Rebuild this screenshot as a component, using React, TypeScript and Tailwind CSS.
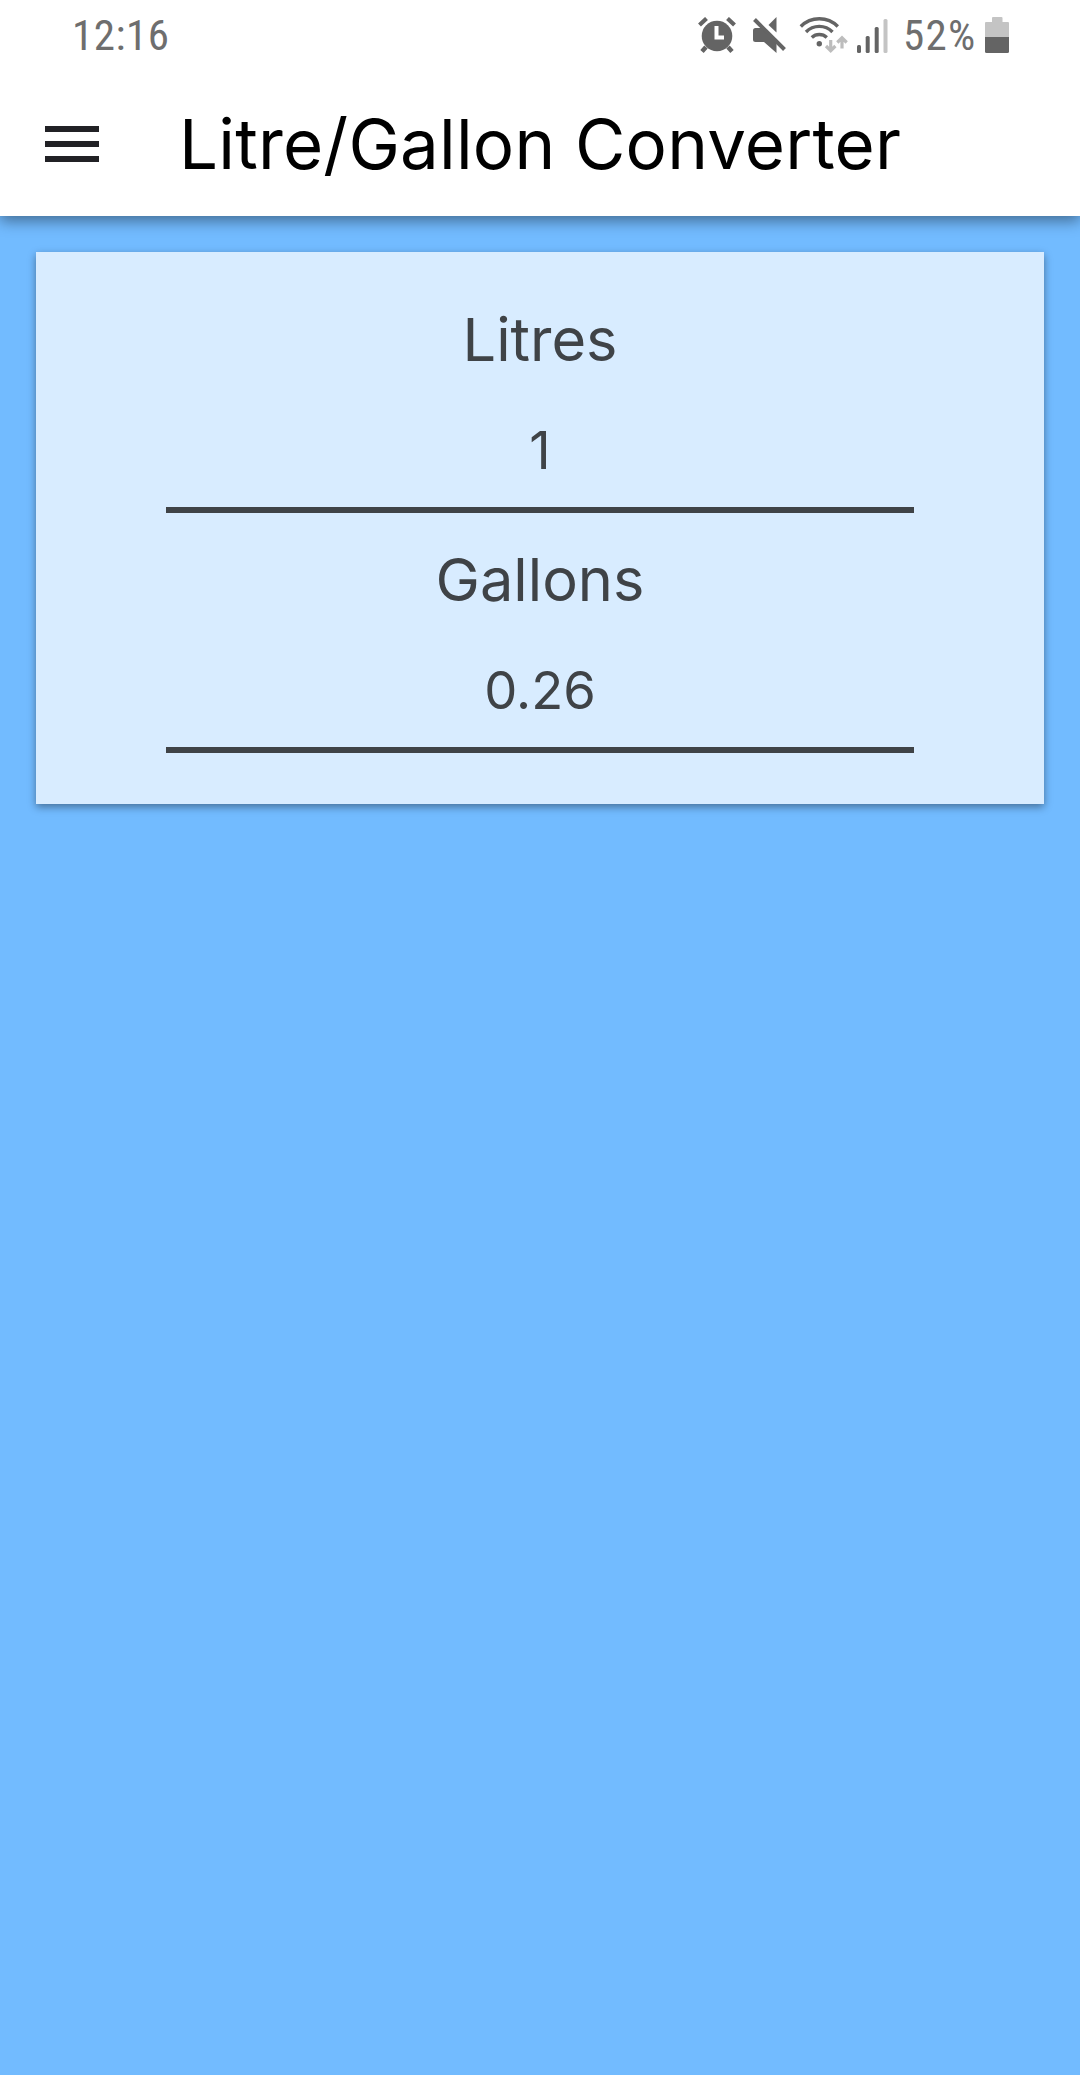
type ConverterFieldProps = {
  label: string;
  value: string;
};

function AlarmIcon() {
  return (
    <svg width="38" height="36" viewBox="0 0 38 36" fill="#646464" aria-hidden="true">
      <circle cx="19" cy="19" r="15.3" />
      <path d="M1.5 8 8.5 1.500M29.5 1.500l7 6.500" stroke="#646464" strokeWidth="4.2" />
      <path d="m8 30-4 4.500M30 30l4 4.500" stroke="#646464" strokeWidth="4.5" />
      <path d="M18.5 9v11.5H26" fill="none" stroke="#fff" strokeWidth="4" />
    </svg>
  );
}

function MuteIcon() {
  return (
    <svg width="34" height="36" viewBox="0 0 34 36" fill="#646464" aria-hidden="true">
      <path d="M0 13.5Q0 11 2.500 11H9L23.500 26v10L11 25H2.500Q0 25 0 22.500Z" />
      <path d="M23.500 0v15.500L15.500 8Z" />
      <path d="m1.500 2.500 30 30" stroke="#646464" strokeWidth="4" />
    </svg>
  );
}

function WifiIcon() {
  return (
    <svg width="50" height="36" viewBox="0 0 50 36" fill="none" aria-hidden="true">
      <g stroke="#646464" strokeWidth="3.4">
        <path d="M2.800 9.500a26 26 0 0 1 37 0" />
        <path d="M8 15a18.500 18.500 0 0 1 26.500 0" />
        <path d="M13.800 20.500a11 11 0 0 1 15 0" />
      </g>
      <circle cx="21.300" cy="26.700" r="2.700" fill="#646464" />
      <g stroke="#bdbdbd" strokeWidth="3.2">
        <path d="M32.700 23v11M28 29l4.700 4.700 4.700-4.700" />
        <path d="M44 31.500V21M39.300 25.500l4.700-4.700 4.700 4.700" />
      </g>
    </svg>
  );
}

function SignalIcon() {
  return (
    <svg width="31" height="34" viewBox="0 0 31 34" fill="#646464" aria-hidden="true">
      <rect x="0" y="26" width="4" height="8" rx="1.500" />
      <rect x="8.700" y="17" width="4" height="17" rx="1.500" />
      <rect x="17.700" y="8" width="4" height="26" rx="1.500" />
      <rect x="26.500" y="0" width="4" height="34" rx="1.500" fill="#c4c4c4" />
    </svg>
  );
}

function BatteryIcon() {
  return (
    <svg width="24" height="36" viewBox="0 0 24 36" aria-hidden="true">
      <path d="M7 1q0-1 1-1h8.500q1 0 1 1v4H23q1 0 1 1v14H0V6q0-1 1-1h6Z" fill="#c4c4c4" />
      <path d="M0 20h24v14.500q0 1.500-1.500 1.500h-21Q0 36 0 34.500Z" fill="#646464" />
    </svg>
  );
}

function StatusBar() {
  return (
    <div className="flex h-[72px] items-start pl-[72px] pr-[71px] pt-[17px] font-['Roboto_Condensed',Roboto,sans-serif] text-[43px] leading-[36px] text-[#6e6e6e]">
      <span className="mr-auto tracking-[0.5px]">12:16</span>
      <div className="flex">
        <AlarmIcon />
        <span className="ml-[17px]">
          <MuteIcon />
        </span>
        <span className="ml-[11px]">
          <WifiIcon />
        </span>
        <span className="ml-[9px] mt-[2px]">
          <SignalIcon />
        </span>
        <span className="ml-[15px] w-[74px] whitespace-nowrap tracking-[1.3px]">52%</span>
        <span className="ml-[8px]">
          <BatteryIcon />
        </span>
      </div>
    </div>
  );
}

function ConverterField({ label, value }: ConverterFieldProps) {
  return (
    <div className="flex flex-col gap-3 text-center text-[#3f4347]">
      <div className="text-[59.5px] leading-[84px]">{label}</div>
      <div className="border-b-6 border-[#3f4347] text-[52.5px] leading-[114px]">{value}</div>
    </div>
  );
}

export default function App() {
  return (
    <div className="flex min-h-[2075px] flex-col bg-[#72bbff] font-[Inter,sans-serif]">
      <header className="bg-white shadow-[0_5px_14px_rgba(0,0,0,0.42)]">
        <StatusBar />
        <div className="flex h-36 items-center pl-[45px]">
          <button type="button" aria-label="Menu" className="flex w-[54px] flex-col gap-[9px]">
            <span className="h-1.5 bg-[#212125]" />
            <span className="h-1.5 bg-[#212125]" />
            <span className="h-1.5 bg-[#212125]" />
          </button>
          <h1 className="ml-20 whitespace-nowrap text-[69px] leading-[84px] tracking-[0.2px] text-black">
            Litre/Gallon Converter
          </h1>
        </div>
      </header>

      <main className="p-9">
        <section className="flex flex-col gap-6 bg-[#d8ecff] px-[130px] pb-[51px] pt-[45px] shadow-[0_3px_8px_rgba(0,0,0,0.4)]">
          <ConverterField label="Litres" value="1" />
          <ConverterField label="Gallons" value="0.26" />
        </section>
      </main>
    </div>
  );
}
